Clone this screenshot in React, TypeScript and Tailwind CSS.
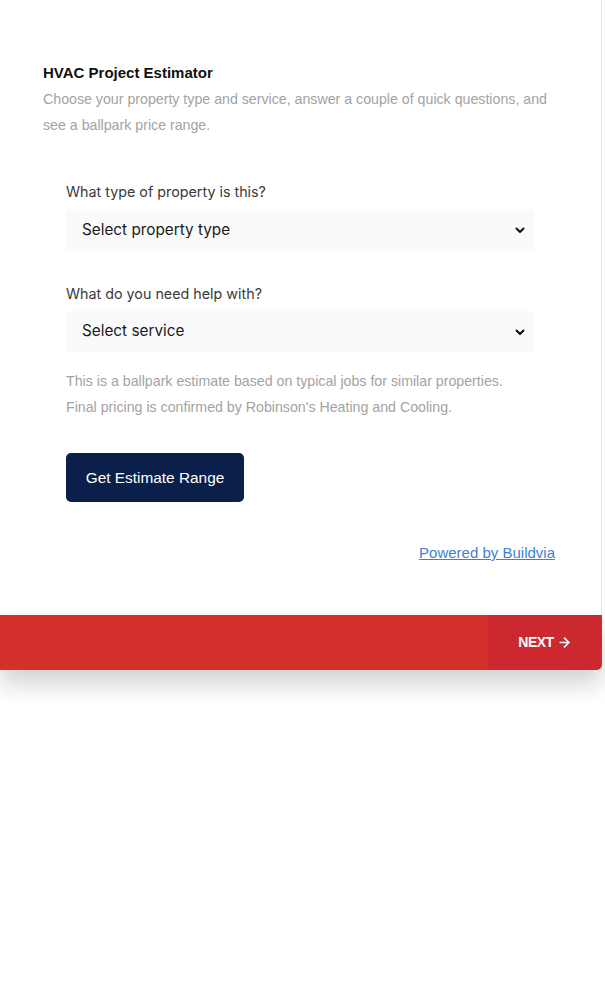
import { ArrowRight } from "lucide-react";

export default function App() {
  return (
    <div className="min-h-[986px] w-[605px] bg-white">
      <div className="w-[602px] border-r border-[#e5e7eb] bg-white">
        <div className="px-[43px] pt-[63px] pb-[53px]">
          <h1 className="text-[15px] font-bold leading-[20px] text-[#111] font-['Liberation_Sans',Arial,sans-serif]">
            HVAC Project Estimator
          </h1>
          <p className="mt-[3px] text-[14.2px] leading-[26px] text-[#a3a3a3] font-['Liberation_Sans',Arial,sans-serif]">
            Choose your property type and service, answer a couple of quick questions, and see a ballpark price range.
          </p>

          <div className="mt-[44px] pl-[23px] pr-[22px]">
            <label className="block text-[14.3px] leading-[20px] text-[#3a3a3a] font-['Inter',sans-serif]">
              What type of property is this?
            </label>
            <div className="mt-[7px] flex h-[42px] w-[469px] items-center justify-between rounded-[4px] bg-[#fafafa] pl-[16px] pr-[10px]">
              <span className="text-[15.3px] text-[#1a1a1a] font-['Inter',sans-serif]">Select property type</span>
              <Chevron />
            </div>

            <label className="mt-[33px] block text-[14.3px] leading-[20px] text-[#3a3a3a] font-['Inter',sans-serif]">
              What do you need help with?
            </label>
            <div className="mt-[7px] flex h-[41px] w-[469px] items-center justify-between rounded-[4px] bg-[#fafafa] pl-[16px] pr-[10px]">
              <span className="text-[15.3px] text-[#1a1a1a] font-['Inter',sans-serif]">Select service</span>
              <Chevron />
            </div>

            <p className="mt-[16px] text-[14.2px] leading-[26px] text-[#a3a3a3] font-['Liberation_Sans',Arial,sans-serif]">
              This is a ballpark estimate based on typical jobs for similar properties.
              <br />
              Final pricing is confirmed by Robinson's Heating and Cooling.
            </p>

            <button className="mt-[33px] flex h-[49px] w-[178px] items-center justify-center rounded-[5px] bg-[#0b1f4b] text-[15.4px] text-white font-['Liberation_Sans',Arial,sans-serif]">
              Get Estimate Range
            </button>

            <div className="mt-[42px] mr-[-19px] flex justify-end">
              <a className="text-[15px] leading-[18px] text-[#3f7fd6] underline font-['Liberation_Sans',Arial,sans-serif]">
                Powered by Buildvia
              </a>
            </div>
          </div>
        </div>

        <div className="flex h-[55px] w-[602px] items-stretch justify-between rounded-br-[6px] bg-[#d6302c] shadow-[0_14px_24px_rgba(0,0,0,0.18)]">
          <div />
          <div className="flex w-[114px] items-center justify-center gap-[3px] rounded-br-[6px] bg-[#cc2830] text-[14px] font-bold text-white font-['Liberation_Sans',Arial,sans-serif]">
            <span className="tracking-[-0.5px]">NEXT</span>
            <ArrowRight size={15} strokeWidth={2.5} />
          </div>
        </div>
      </div>
    </div>
  );
}

function Chevron() {
  return (
    <svg width="10" height="8" viewBox="0 0 10 8" fill="none">
      <path d="M1.5 2.5 5 6 8.5 2.5" stroke="#111" strokeWidth="2" strokeLinecap="round" strokeLinejoin="round" />
    </svg>
  );
}
